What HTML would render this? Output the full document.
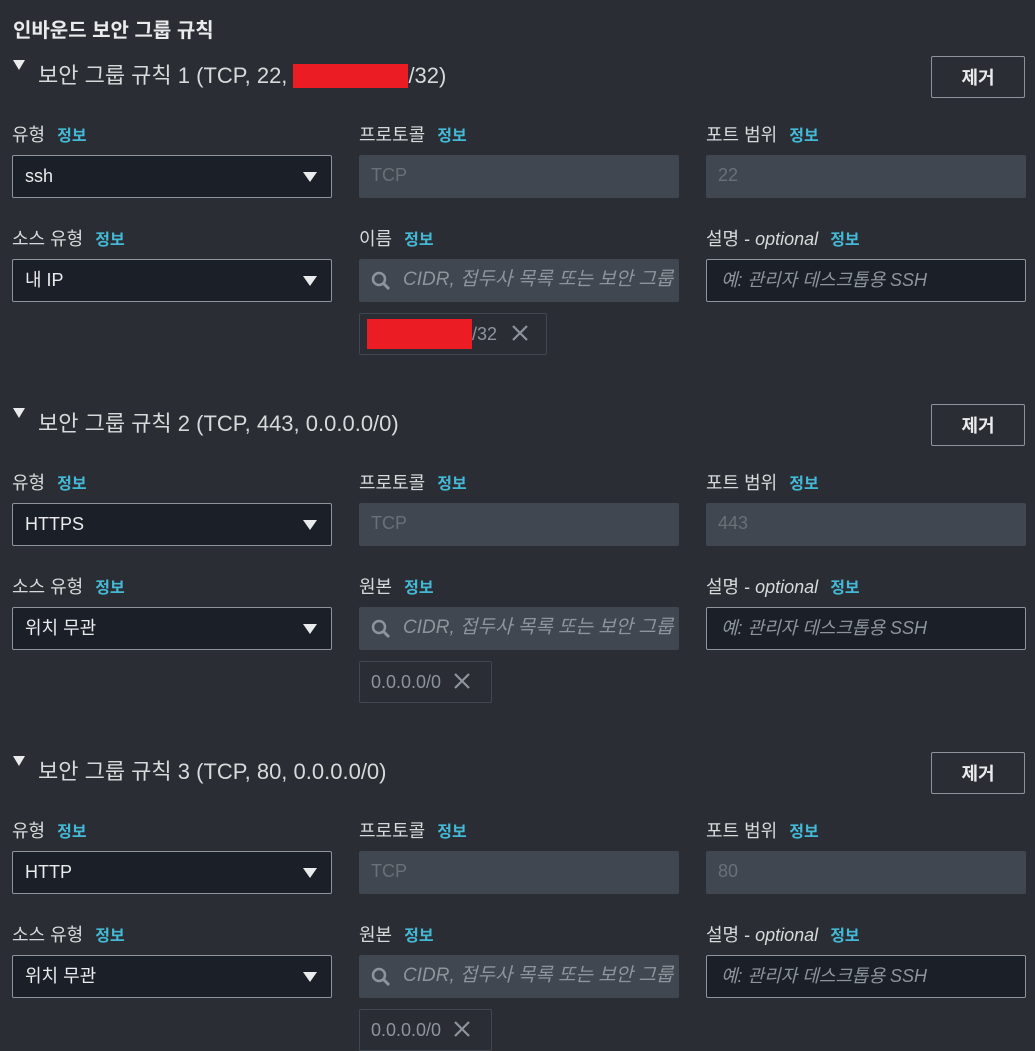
<!DOCTYPE html>
<html><head><meta charset="utf-8">
<style>
*{margin:0;padding:0;box-sizing:border-box}
body{width:1035px;height:1049px;background:#2a2d33;font-family:"Liberation Sans","Noto Sans CJK KR",sans-serif;color:#d5dbdb;position:relative;overflow:hidden}
.a{position:absolute}
.title{left:13px;top:14px;font-size:20px;font-weight:bold;color:#e9ebed}
.tri{width:0;height:0;border-left:6px solid transparent;border-right:6px solid transparent;border-top:10px solid #e9ebed}
.hd{font-size:22px;color:#d5dbdb;white-space:nowrap;line-height:26px}
.btn{width:94px;height:42px;border:1px solid #8d949c;border-radius:2px;font-weight:bold;font-size:18px;color:#e9ebed;display:flex;align-items:center;justify-content:center}
.lb{font-size:18px;color:#d5dbdb;line-height:22px;white-space:nowrap}
.lb b{color:#44b9d6;font-size:16px;margin-left:12px}
.lb i{font-style:italic}
.in{height:43px;border-radius:2px;font-size:18px;line-height:41px;padding-left:12px;white-space:nowrap;overflow:hidden}
.sel{width:320px;background:#1b1f28;border:1px solid #8d949c;color:#e9ebed}
.dis{width:320px;background:#414750;color:#687078}
.txt{width:320px;background:#1b1f28;border:1px solid #8d949c;color:#8d949c;font-style:italic;padding-left:14px}
.srch{width:320px;background:#414750;color:#8d949c;font-style:italic;padding-left:44px;font-size:19px}
.arr{position:absolute;right:14px;top:16px}
.tok{height:42px;border:1px solid #414750;border-radius:2px;font-size:18px;color:#8d949c;line-height:40px;padding-left:11px;white-space:nowrap}
</style></head><body>
<div class="a title">인바운드 보안 그룹 규칙</div>

<div class="a" style="left:0;top:0;width:1035px;height:348px">
  <div class="a tri" style="left:13px;top:60px"></div>
  <div class="a hd" style="left:38px;top:63px">보안 그룹 규칙 1 (TCP, 22,<span style="display:inline-block;width:115px;height:24px;background:#ec1c24;vertical-align:-5px;margin-left:6px"></span>/32)</div>
  <div class="a btn" style="left:931px;top:56px">제거</div>
  <div class="a lb" style="left:12px;top:124px">유형<b>정보</b></div>
  <div class="a lb" style="left:359px;top:124px">프로토콜<b>정보</b></div>
  <div class="a lb" style="left:706px;top:124px">포트 범위<b>정보</b></div>
  <div class="a in sel" style="left:12px;top:155px">ssh<svg class="arr" width="14" height="10"><path d="M0 0H14L7 10Z" fill="#e9ebed"/></svg></div>
  <div class="a in dis" style="left:359px;top:155px">TCP</div>
  <div class="a in dis" style="left:706px;top:155px">22</div>
  <div class="a lb" style="left:12px;top:228px">소스 유형<b>정보</b></div>
  <div class="a lb" style="left:359px;top:228px">이름<b>정보</b></div>
  <div class="a lb" style="left:706px;top:228px">설명 - <i>optional</i><b>정보</b></div>
  <div class="a in sel" style="left:12px;top:259px">내 IP<svg class="arr" width="14" height="10"><path d="M0 0H14L7 10Z" fill="#e9ebed"/></svg></div>
  <div class="a in srch" style="left:359px;top:259px"><svg class="a" style="left:12px;top:12px" width="20" height="20"><circle cx="8" cy="8" r="6" fill="none" stroke="#8d949c" stroke-width="2.5"/><path d="M12.5 12.5L18 18" stroke="#8d949c" stroke-width="3"/></svg>CIDR, 접두사 목록 또는 보안 그룹</div>
  <div class="a in txt" style="left:706px;top:259px">예: 관리자 데스크톱용 SSH</div>
  <div class="a tok" style="left:359px;top:313px;width:188px"><span style="display:inline-block;width:105px;height:30px;background:#ec1c24;vertical-align:-9px;margin-left:-4px"></span>/32<svg style="margin-left:14px;vertical-align:-2px" width="18" height="18"><path d="M2 2L16 16M16 2L2 16" stroke="#8d949c" stroke-width="2.2"/></svg></div>
</div>

<div class="a" style="left:0;top:348px;width:1035px;height:348px">
  <div class="a tri" style="left:13px;top:60px"></div>
  <div class="a hd" style="left:38px;top:63px">보안 그룹 규칙 2 (TCP, 443, 0.0.0.0/0)</div>
  <div class="a btn" style="left:931px;top:56px">제거</div>
  <div class="a lb" style="left:12px;top:124px">유형<b>정보</b></div>
  <div class="a lb" style="left:359px;top:124px">프로토콜<b>정보</b></div>
  <div class="a lb" style="left:706px;top:124px">포트 범위<b>정보</b></div>
  <div class="a in sel" style="left:12px;top:155px">HTTPS<svg class="arr" width="14" height="10"><path d="M0 0H14L7 10Z" fill="#e9ebed"/></svg></div>
  <div class="a in dis" style="left:359px;top:155px">TCP</div>
  <div class="a in dis" style="left:706px;top:155px">443</div>
  <div class="a lb" style="left:12px;top:228px">소스 유형<b>정보</b></div>
  <div class="a lb" style="left:359px;top:228px">원본<b>정보</b></div>
  <div class="a lb" style="left:706px;top:228px">설명 - <i>optional</i><b>정보</b></div>
  <div class="a in sel" style="left:12px;top:259px">위치 무관<svg class="arr" width="14" height="10"><path d="M0 0H14L7 10Z" fill="#e9ebed"/></svg></div>
  <div class="a in srch" style="left:359px;top:259px"><svg class="a" style="left:12px;top:12px" width="20" height="20"><circle cx="8" cy="8" r="6" fill="none" stroke="#8d949c" stroke-width="2.5"/><path d="M12.5 12.5L18 18" stroke="#8d949c" stroke-width="3"/></svg>CIDR, 접두사 목록 또는 보안 그룹</div>
  <div class="a in txt" style="left:706px;top:259px">예: 관리자 데스크톱용 SSH</div>
  <div class="a tok" style="left:359px;top:313px;width:133px">0.0.0.0/0<svg style="margin-left:12px;vertical-align:-2px" width="18" height="18"><path d="M2 2L16 16M16 2L2 16" stroke="#8d949c" stroke-width="2.2"/></svg></div>
</div>

<div class="a" style="left:0;top:696px;width:1035px;height:353px">
  <div class="a tri" style="left:13px;top:60px"></div>
  <div class="a hd" style="left:38px;top:63px">보안 그룹 규칙 3 (TCP, 80, 0.0.0.0/0)</div>
  <div class="a btn" style="left:931px;top:56px">제거</div>
  <div class="a lb" style="left:12px;top:124px">유형<b>정보</b></div>
  <div class="a lb" style="left:359px;top:124px">프로토콜<b>정보</b></div>
  <div class="a lb" style="left:706px;top:124px">포트 범위<b>정보</b></div>
  <div class="a in sel" style="left:12px;top:155px">HTTP<svg class="arr" width="14" height="10"><path d="M0 0H14L7 10Z" fill="#e9ebed"/></svg></div>
  <div class="a in dis" style="left:359px;top:155px">TCP</div>
  <div class="a in dis" style="left:706px;top:155px">80</div>
  <div class="a lb" style="left:12px;top:228px">소스 유형<b>정보</b></div>
  <div class="a lb" style="left:359px;top:228px">원본<b>정보</b></div>
  <div class="a lb" style="left:706px;top:228px">설명 - <i>optional</i><b>정보</b></div>
  <div class="a in sel" style="left:12px;top:259px">위치 무관<svg class="arr" width="14" height="10"><path d="M0 0H14L7 10Z" fill="#e9ebed"/></svg></div>
  <div class="a in srch" style="left:359px;top:259px"><svg class="a" style="left:12px;top:12px" width="20" height="20"><circle cx="8" cy="8" r="6" fill="none" stroke="#8d949c" stroke-width="2.5"/><path d="M12.5 12.5L18 18" stroke="#8d949c" stroke-width="3"/></svg>CIDR, 접두사 목록 또는 보안 그룹</div>
  <div class="a in txt" style="left:706px;top:259px">예: 관리자 데스크톱용 SSH</div>
  <div class="a tok" style="left:359px;top:313px;width:133px">0.0.0.0/0<svg style="margin-left:12px;vertical-align:-2px" width="18" height="18"><path d="M2 2L16 16M16 2L2 16" stroke="#8d949c" stroke-width="2.2"/></svg></div>
</div>
</body></html>
